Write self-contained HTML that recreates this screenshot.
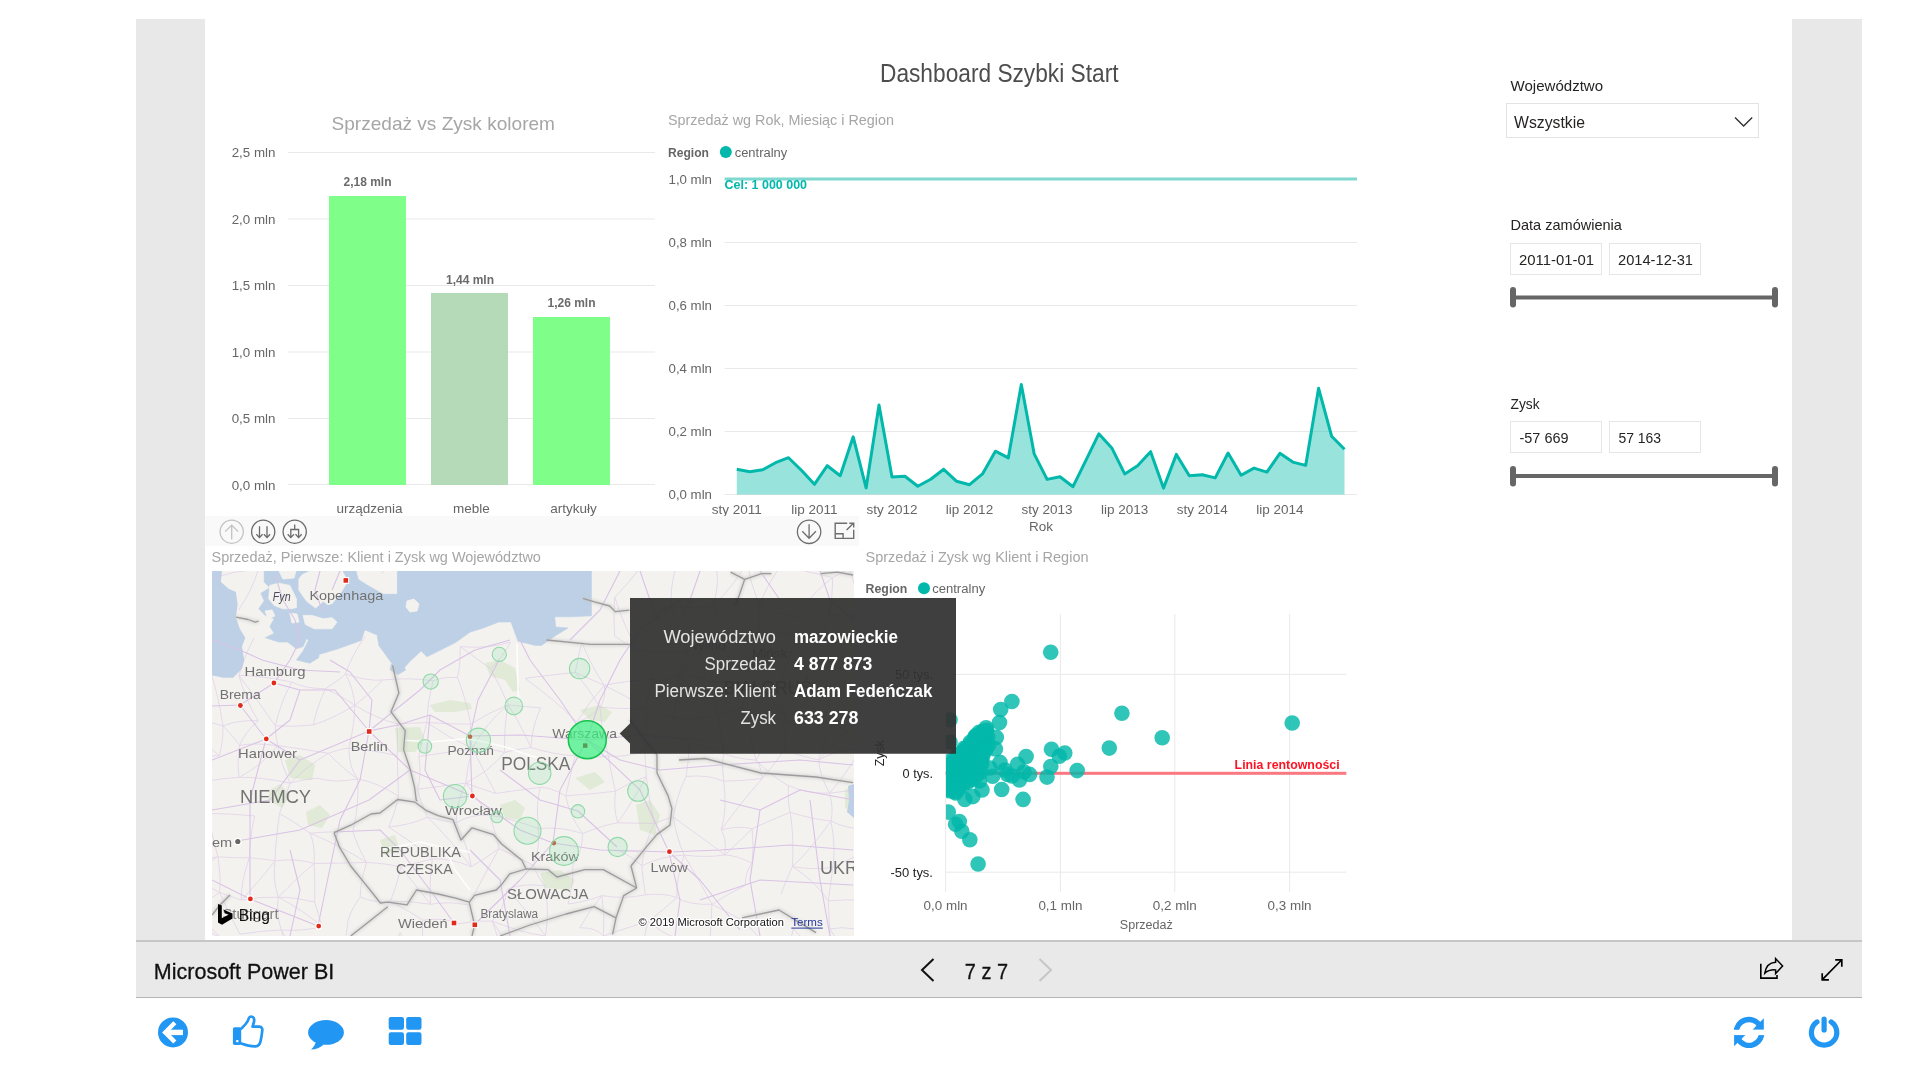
<!DOCTYPE html>
<html><head><meta charset="utf-8">
<style>
html,body{margin:0;padding:0;width:1920px;height:1080px;overflow:hidden;background:#fff;}
svg{display:block;font-family:"Liberation Sans",sans-serif;will-change:transform;}
</style></head>
<body>
<svg width="1920" height="1080" viewBox="0 0 1920 1080">
<!-- frame -->
<rect x="136" y="19" width="69" height="921" fill="#e8e8e8"/>
<rect x="1792" y="19" width="70" height="921" fill="#e8e8e8"/>
<!-- bottom bar -->
<rect x="136" y="940" width="1726" height="58" fill="#e9e9e9"/>
<rect x="136" y="940" width="1726" height="2" fill="#c6c6c6"/>
<rect x="136" y="997" width="1726" height="1" fill="#b4b4b4"/>

<!-- TITLE -->
<text x="880" y="82.3" font-size="25" fill="#4d4d4d" textLength="238.5" lengthAdjust="spacingAndGlyphs">Dashboard Szybki Start</text>

<!-- BAR CHART -->
<g id="bar">
<text x="331.5" y="130.1" font-size="18.5" fill="#a6a6a6" textLength="223.5" lengthAdjust="spacingAndGlyphs">Sprzedaż vs Zysk kolorem</text>
<g stroke="#e9e9e9" stroke-width="1">
<line x1="288" y1="152.5" x2="655" y2="152.5"/>
<line x1="288" y1="219" x2="655" y2="219"/>
<line x1="288" y1="285.5" x2="655" y2="285.5"/>
<line x1="288" y1="352" x2="655" y2="352"/>
<line x1="288" y1="418.5" x2="655" y2="418.5"/>
<line x1="288" y1="484.5" x2="655" y2="484.5"/>
</g>
<g font-size="12.5" fill="#666" text-anchor="end">
<text x="275.5" y="157" textLength="43.8" lengthAdjust="spacingAndGlyphs">2,5 mln</text>
<text x="275.5" y="223.5" textLength="43.8" lengthAdjust="spacingAndGlyphs">2,0 mln</text>
<text x="275.5" y="290" textLength="43.8" lengthAdjust="spacingAndGlyphs">1,5 mln</text>
<text x="275.5" y="356.5" textLength="43.8" lengthAdjust="spacingAndGlyphs">1,0 mln</text>
<text x="275.5" y="423" textLength="43.8" lengthAdjust="spacingAndGlyphs">0,5 mln</text>
<text x="275.5" y="489.5" textLength="43.8" lengthAdjust="spacingAndGlyphs">0,0 mln</text>
</g>
<rect x="329" y="196" width="77" height="289" fill="#80fe8a"/>
<rect x="431" y="293" width="77" height="192" fill="#b4dab7"/>
<rect x="533" y="317" width="77" height="168" fill="#80fe8a"/>
<g font-size="12" fill="#6b6b6b" font-weight="bold" text-anchor="middle">
<text x="367.5" y="186">2,18 mln</text>
<text x="470" y="283.8">1,44 mln</text>
<text x="571.5" y="306.7">1,26 mln</text>
</g>
<g font-size="13.5" fill="#666" text-anchor="middle">
<text x="369.5" y="512.5">urządzenia</text>
<text x="471.5" y="512.5">meble</text>
<text x="573.5" y="512.5">artykuły</text>
</g>
</g>


<!-- LINE CHART -->
<g id="linechart">
<text x="668" y="125.2" font-size="15" fill="#a6a6a6" textLength="226" lengthAdjust="spacingAndGlyphs">Sprzedaż wg Rok, Miesiąc i Region</text>
<text x="668" y="156.7" font-size="12.5" font-weight="bold" fill="#666" textLength="41" lengthAdjust="spacingAndGlyphs">Region</text>
<circle cx="725.8" cy="152.1" r="6" fill="#01b8aa"/>
<text x="734.7" y="156.7" font-size="12.5" fill="#666" textLength="52.6" lengthAdjust="spacingAndGlyphs">centralny</text>
<g stroke="#e9e9e9" stroke-width="1">
<line x1="724.6" y1="242.5" x2="1357" y2="242.5"/>
<line x1="724.6" y1="305.5" x2="1357" y2="305.5"/>
<line x1="724.6" y1="368.5" x2="1357" y2="368.5"/>
<line x1="724.6" y1="431.5" x2="1357" y2="431.5"/>
<line x1="724.6" y1="494.5" x2="1357" y2="494.5"/>
</g>
<g font-size="12.5" fill="#666" text-anchor="end">
<text x="712" y="184" textLength="43.5" lengthAdjust="spacingAndGlyphs">1,0 mln</text>
<text x="712" y="247" textLength="43.5" lengthAdjust="spacingAndGlyphs">0,8 mln</text>
<text x="712" y="310" textLength="43.5" lengthAdjust="spacingAndGlyphs">0,6 mln</text>
<text x="712" y="373" textLength="43.5" lengthAdjust="spacingAndGlyphs">0,4 mln</text>
<text x="712" y="436" textLength="43.5" lengthAdjust="spacingAndGlyphs">0,2 mln</text>
<text x="712" y="499" textLength="43.5" lengthAdjust="spacingAndGlyphs">0,0 mln</text>
</g>
<rect x="724.6" y="177.5" width="632.4" height="3" fill="#80d8d0"/>
<text x="724.6" y="188.9" font-size="12" font-weight="bold" fill="#01b8aa" textLength="82.4" lengthAdjust="spacingAndGlyphs">Cel: 1 000 000</text>
<polygon points="736.8,494.5 736.8,469.3 749.7,471.7 762.7,469.7 775.6,462.7 788.5,457.7 801.4,470.3 814.4,484.3 827.3,465.7 840.2,475.7 853.2,436.8 866.1,487.9 879.0,405.1 892.0,476.9 904.9,476.3 917.8,486.3 930.7,479.3 943.7,469.3 956.6,481.3 969.5,484.7 982.5,473.9 995.4,451.2 1008.3,457.9 1021.3,384.5 1034.2,453.9 1047.1,479.4 1060.0,476.7 1073.0,486.7 1085.9,460.3 1098.8,433.8 1111.8,447.9 1124.7,473.9 1137.6,465.7 1150.6,451.7 1163.5,488.1 1176.4,454.4 1189.3,475.8 1202.3,474.8 1215.2,477.9 1228.1,453 1241.1,475.2 1254.0,468.1 1266.9,472.1 1279.9,453.3 1292.8,462.1 1305.7,465.4 1318.6,388.3 1331.6,436.2 1344.5,449.3 1344.5,494.5" fill="#01b8aa" fill-opacity="0.4"/>
<polyline points="736.8,469.3 749.7,471.7 762.7,469.7 775.6,462.7 788.5,457.7 801.4,470.3 814.4,484.3 827.3,465.7 840.2,475.7 853.2,436.8 866.1,487.9 879.0,405.1 892.0,476.9 904.9,476.3 917.8,486.3 930.7,479.3 943.7,469.3 956.6,481.3 969.5,484.7 982.5,473.9 995.4,451.2 1008.3,457.9 1021.3,384.5 1034.2,453.9 1047.1,479.4 1060.0,476.7 1073.0,486.7 1085.9,460.3 1098.8,433.8 1111.8,447.9 1124.7,473.9 1137.6,465.7 1150.6,451.7 1163.5,488.1 1176.4,454.4 1189.3,475.8 1202.3,474.8 1215.2,477.9 1228.1,453 1241.1,475.2 1254.0,468.1 1266.9,472.1 1279.9,453.3 1292.8,462.1 1305.7,465.4 1318.6,388.3 1331.6,436.2 1344.5,449.3" fill="none" stroke="#01b8aa" stroke-width="3" stroke-linejoin="round"/>

<g font-size="13.5" fill="#666" text-anchor="middle">
<text x="736.8" y="513.7">sty 2011</text>
<text x="814.4" y="513.7">lip 2011</text>
<text x="892" y="513.7">sty 2012</text>
<text x="969.5" y="513.7">lip 2012</text>
<text x="1047.1" y="513.7">sty 2013</text>
<text x="1124.7" y="513.7">lip 2013</text>
<text x="1202.3" y="513.7">sty 2014</text>
<text x="1279.9" y="513.7">lip 2014</text>
<text x="1041" y="531.3">Rok</text>
</g>
</g>

<!-- TOOLBAR -->
<rect x="205" y="516" width="654" height="30" fill="#f9f9f9"/>
<g fill="none" stroke-width="1.3">
<g stroke="#c2c2c2"><circle cx="231.7" cy="531.7" r="11.6"/><path d="M231.7,539.4 V525.3 M225.2,531.6 L231.7,525.1 L238.2,531.6"/></g>
<g stroke="#6a6a6a"><circle cx="263.2" cy="531.7" r="11.6"/><path d="M259.5,526.2 V537 M256.4,534.2 L259.5,537.6 L262.6,534.2 M267,526.2 V537 M263.9,534.2 L267,537.6 L270.1,534.2"/></g>
<g stroke="#6a6a6a"><circle cx="294.7" cy="531.7" r="11.6"/><path d="M294.7,524.6 V529.5 M290.8,537 V529.5 H298.6 V537 M287.7,534.2 L290.8,537.6 L293.9,534.2 M295.5,534.2 L298.6,537.6 L301.7,534.2"/></g>
<g stroke="#6e6e6e"><circle cx="809.1" cy="531.8" r="11.7"/><path d="M809.1,524.3 V538 M802.3,531.2 L809.1,538.2 L815.9,531.2"/></g>
<g stroke="#6e6e6e" stroke-width="1.4"><path d="M847.2,523.3 H835.2 V538.4 H853.7 V529.7 M835.2,533.8 H843.1 V538.4 M846.6,530.1 L853.7,523 M849.3,523.3 H853.7 V527.4"/></g>
</g>

<!-- MAP TITLE -->
<text x="211.6" y="561.8" font-size="14.5" fill="#a6a6a6" textLength="329.3" lengthAdjust="spacingAndGlyphs">Sprzedaż, Pierwsze: Klient i Zysk wg Województwo</text>


<!-- MAP -->
<defs><clipPath id="mapClip"><rect x="212" y="571" width="642" height="365"/></clipPath>
<filter id="halo" x="-20%" y="-20%" width="140%" height="140%"><feGaussianBlur stdDeviation="1.6"/></filter></defs>
<g clip-path="url(#mapClip)">
<rect x="212" y="571" width="642" height="365" fill="#f4f2ef"/>
<polygon points="485.0,663.0 500.0,660.0 515.0,668.0 520.0,690.0 513.0,692.0 505.0,680.0 490.0,676.0" fill="#e0ead6"/>
<polygon points="430.0,705.0 450.0,700.0 470.0,703.0 472.0,709.0 455.0,712.0 435.0,712.0" fill="#e0ead6"/>
<polygon points="395.0,728.0 420.0,727.0 425.0,740.0 415.0,752.0 398.0,752.0" fill="#e0ead6"/>
<polygon points="580.0,710.0 600.0,705.0 612.0,712.0 605.0,722.0 590.0,720.0" fill="#e0ead6"/>
<polygon points="636.0,805.0 650.0,800.0 660.0,815.0 655.0,835.0 640.0,830.0" fill="#e0ead6"/>
<polygon points="540.0,873.0 560.0,870.0 575.0,880.0 570.0,890.0 545.0,888.0" fill="#e0ead6"/>
<polygon points="285.0,760.0 300.0,755.0 315.0,765.0 312.0,780.0 290.0,778.0" fill="#e0ead6"/>
<polygon points="306.0,812.0 320.0,805.0 330.0,815.0 322.0,828.0 308.0,825.0" fill="#e0ead6"/>
<polygon points="270.0,790.0 280.0,784.0 290.0,795.0 282.0,808.0 268.0,800.0" fill="#e0ead6"/>
<polygon points="500.0,805.0 515.0,800.0 525.0,808.0 520.0,820.0 505.0,818.0" fill="#e0ead6"/>
<polygon points="380.0,840.0 395.0,835.0 400.0,850.0 385.0,855.0" fill="#e0ead6"/>
<polygon points="845.0,790.0 853.0,785.0 853.0,810.0 845.0,808.0" fill="#e0ead6"/>
<polygon points="575.0,778.0 595.0,772.0 605.0,782.0 590.0,790.0" fill="#e0ead6"/>
<polygon points="212.0,571.0 222.0,571.0 220.9,582.1 228.7,588.8 235.9,592.1 237.6,604.3 235.9,617.7 239.8,628.8 245.3,637.7 242.0,646.6 244.2,659.9 242.0,668.8 233.1,677.7 223.1,677.7 217.6,676.6 212.0,675.4" fill="#bdd0e5"/>
<polygon points="264.2,571.0 591.4,571.0 591.4,590.4 591.4,615.8 572.0,616.8 554.7,616.8 555.7,627.0 568.0,628.0 554.7,636.2 541.5,645.4 535.4,645.4 518.0,641.3 511.0,622.0 498.7,622.0 483.4,628.0 470.2,632.1 455.5,642.6 427.0,656.8 421.1,651.0 410.0,661.3 403.5,668.5 393.0,665.0 378.9,645.6 377.1,635.1 364.8,629.8 361.3,640.4 336.7,649.2 319.0,654.4 318.7,657.7 309.8,663.2 296.4,659.9 303.1,651.0 308.7,639.9 306.4,638.8 303.1,646.6 296.4,648.8 287.6,642.1 278.7,642.1 265.3,637.7 274.2,633.2 269.8,626.6 274.2,618.8 265.3,615.4 258.7,608.8 264.2,601.0 260.9,593.2 269.8,587.7 264.2,582.1" fill="#bdd0e5" stroke="#bdd0e5" stroke-width="0.6" stroke-linejoin="round"/>
<polygon points="269.8,585.4 278.7,583.2 289.8,585.4 296.4,598.8 296.4,607.7 289.8,608.8 283.1,608.8 274.2,605.4 268.7,598.8" fill="#f4f2ef" stroke="#f4f2ef" stroke-width="0.8" stroke-linejoin="round"/>
<polygon points="302.2,574.7 310.0,571.0 342.2,571.0 347.8,581.3 341.0,592.4 332.2,603.6 327.8,604.7 323.3,601.3 315.6,608.0 306.7,601.3 298.9,590.2 298.9,579.0" fill="#f4f2ef" stroke="#f4f2ef" stroke-width="0.8" stroke-linejoin="round"/>
<polygon points="303.1,615.4 312.0,615.4 323.1,618.8 332.0,617.7 337.0,622.0 332.0,628.8 323.1,628.8 314.2,628.8 305.3,624.3" fill="#f4f2ef" stroke="#f4f2ef" stroke-width="0.8" stroke-linejoin="round"/>
<polygon points="356.7,571.0 396.7,571.0 396.7,593.6 383.3,593.6 367.8,584.7 358.9,579.1" fill="#f4f2ef" stroke="#f4f2ef" stroke-width="0.8" stroke-linejoin="round"/>
<polygon points="407.0,601.0 414.0,599.0 419.0,604.0 417.0,611.0 410.0,612.0 406.0,607.0" fill="#f4f2ef" stroke="#f4f2ef" stroke-width="0.8" stroke-linejoin="round"/>
<polygon points="265.0,611.0 272.0,610.0 275.0,616.0 268.0,619.0" fill="#f4f2ef" stroke="#f4f2ef" stroke-width="0.8" stroke-linejoin="round"/>
<polygon points="289.8,613.0 297.0,614.0 299.0,622.0 292.0,623.0" fill="#f4f2ef" stroke="#f4f2ef" stroke-width="0.8" stroke-linejoin="round"/>
<polygon points="279.0,571.0 296.0,571.0 294.0,578.0 283.0,579.0" fill="#f4f2ef" stroke="#f4f2ef" stroke-width="0.8" stroke-linejoin="round"/>
<polygon points="391.0,664.0 402.0,663.0 406.0,670.0 398.0,675.0 390.0,670.0" fill="#bdd0e5"/>
<polygon points="848.0,786.0 854.0,784.0 854.0,818.0 847.0,812.0 849.0,800.0" fill="#bdd0e5"/>
<g fill="none" stroke="#d9c3e6" stroke-width="1" opacity="0.55"><path d="M175.0,536.3 Q186.2,536.8 201.7,534.2"/><path d="M175.0,536.3 Q178.0,555.4 185.3,570.2"/><path d="M185.3,570.2 Q195.5,569.8 210.7,578.5"/><path d="M185.3,570.2 Q183.3,588.5 176.2,608.9"/><path d="M176.2,608.9 Q198.1,627.0 212.0,646.6"/><path d="M169.1,643.3 Q195.3,642.4 212.0,646.6"/><path d="M169.1,643.3 Q178.3,666.6 178.9,685.4"/><path d="M167.1,710.7 Q196.3,717.8 222.9,725.9"/><path d="M167.1,710.7 Q162.6,734.5 167.0,757.8"/><path d="M167.1,710.7 Q192.7,734.8 219.5,755.6"/><path d="M167.0,757.8 Q190.9,757.5 219.5,755.6"/><path d="M167.0,757.8 Q176.4,767.7 180.3,776.9"/><path d="M180.3,776.9 Q180.8,801.2 186.6,833.2"/><path d="M186.6,833.2 Q181.6,845.1 179.4,861.5"/><path d="M179.4,861.5 Q199.5,860.5 217.9,856.8"/><path d="M179.4,861.5 Q197.0,881.8 219.6,892.5"/><path d="M168.5,884.3 Q190.9,909.2 222.1,938.6"/><path d="M176.6,921.3 Q200.6,926.0 222.1,938.6"/><path d="M176.6,921.3 Q168.6,937.2 169.2,961.3"/><path d="M169.2,961.3 Q186.4,959.7 201.0,960.6"/><path d="M201.7,534.2 Q226.5,532.7 257.0,534.3"/><path d="M201.7,534.2 Q209.6,552.1 210.7,578.5"/><path d="M201.7,534.2 Q233.2,552.7 258.6,568.7"/><path d="M210.7,578.5 Q233.9,571.2 258.6,568.7"/><path d="M212.0,646.6 Q207.4,661.0 211.1,674.1"/><path d="M211.1,674.1 Q218.6,695.8 222.9,725.9"/><path d="M222.9,725.9 Q238.4,719.7 258.2,720.7"/><path d="M222.9,725.9 Q223.5,739.4 219.5,755.6"/><path d="M222.9,725.9 Q233.4,736.4 239.6,745.4"/><path d="M207.9,781.1 Q221.8,778.2 239.2,777.3"/><path d="M207.4,813.5 Q229.6,813.4 254.5,815.9"/><path d="M207.4,813.5 Q211.5,832.1 217.9,856.8"/><path d="M217.9,856.8 Q236.9,858.0 249.3,857.8"/><path d="M217.9,856.8 Q221.3,878.5 219.6,892.5"/><path d="M217.9,856.8 Q193.3,871.0 168.5,884.3"/><path d="M219.6,892.5 Q235.1,897.8 241.2,900.1"/><path d="M219.6,892.5 Q230.2,916.2 239.9,934.2"/><path d="M219.6,892.5 Q193.9,909.3 176.6,921.3"/><path d="M222.1,938.6 Q212.9,946.1 201.0,960.6"/><path d="M201.0,960.6 Q217.5,965.6 239.6,965.3"/><path d="M257.0,534.3 Q270.0,531.1 277.7,529.9"/><path d="M257.0,534.3 Q262.5,553.3 258.6,568.7"/><path d="M258.6,568.7 Q251.8,591.0 238.6,609.8"/><path d="M254.1,637.9 Q245.7,653.1 238.9,675.3"/><path d="M238.9,675.3 Q262.0,675.8 291.8,682.1"/><path d="M238.9,675.3 Q246.5,702.7 258.2,720.7"/><path d="M238.9,675.3 Q255.1,696.7 275.2,725.8"/><path d="M258.2,720.7 Q244.5,732.6 239.6,745.4"/><path d="M239.6,745.4 Q254.7,742.4 277.7,745.7"/><path d="M239.6,745.4 Q236.8,763.5 239.2,777.3"/><path d="M239.2,777.3 Q262.4,777.0 290.0,783.2"/><path d="M254.5,815.9 Q249.5,840.8 249.3,857.8"/><path d="M249.3,857.8 Q266.7,859.2 275.0,860.8"/><path d="M249.3,857.8 Q240.7,883.4 241.2,900.1"/><path d="M241.2,900.1 Q259.9,896.4 278.3,897.2"/><path d="M239.9,934.2 Q260.3,930.8 281.2,930.0"/><path d="M239.6,965.3 Q263.4,964.2 294.1,966.6"/><path d="M277.7,529.9 Q303.4,536.7 321.6,543.1"/><path d="M277.7,529.9 Q270.8,544.4 258.6,568.7"/><path d="M291.8,682.1 Q305.1,688.7 325.3,688.7"/><path d="M291.8,682.1 Q281.6,699.7 275.2,725.8"/><path d="M275.2,725.8 Q292.9,727.2 313.3,724.9"/><path d="M275.2,725.8 Q275.4,735.3 277.7,745.7"/><path d="M277.7,745.7 Q298.2,748.3 328.4,753.3"/><path d="M277.7,745.7 Q281.2,765.1 290.0,783.2"/><path d="M277.7,745.7 Q263.4,764.5 239.2,777.3"/><path d="M290.0,783.2 Q305.3,778.7 318.3,778.3"/><path d="M290.0,783.2 Q285.2,796.4 279.5,813.6"/><path d="M279.5,813.6 Q292.2,820.4 309.9,833.2"/><path d="M279.5,813.6 Q275.5,841.7 275.0,860.8"/><path d="M275.0,860.8 Q297.9,858.1 314.2,863.5"/><path d="M275.0,860.8 Q272.6,880.8 278.3,897.2"/><path d="M275.0,860.8 Q257.1,883.8 241.2,900.1"/><path d="M278.3,897.2 Q292.4,896.9 314.7,902.1"/><path d="M278.3,897.2 Q276.0,912.7 281.2,930.0"/><path d="M278.3,897.2 Q304.4,911.1 322.1,926.5"/><path d="M281.2,930.0 Q304.3,931.4 322.1,926.5"/><path d="M281.2,930.0 Q286.0,947.4 294.1,966.6"/><path d="M281.2,930.0 Q296.0,952.9 312.9,971.8"/><path d="M321.6,543.1 Q335.2,531.2 346.5,529.0"/><path d="M321.6,543.1 Q315.8,554.7 313.0,563.4"/><path d="M325.3,688.7 Q339.6,679.9 345.4,673.9"/><path d="M325.3,688.7 Q315.5,711.5 313.3,724.9"/><path d="M325.3,688.7 Q344.1,697.4 354.8,705.3"/><path d="M313.3,724.9 Q331.7,719.2 354.8,705.3"/><path d="M328.4,753.3 Q341.9,748.6 348.9,748.1"/><path d="M328.4,753.3 Q343.7,769.4 357.6,778.9"/><path d="M328.4,753.3 Q309.7,764.0 290.0,783.2"/><path d="M318.3,778.3 Q334.7,783.5 357.6,778.9"/><path d="M309.9,833.2 Q333.8,831.2 353.0,831.6"/><path d="M309.9,833.2 Q315.1,843.5 314.2,863.5"/><path d="M309.9,833.2 Q337.9,844.2 366.6,862.5"/><path d="M314.2,863.5 Q337.1,863.2 366.6,862.5"/><path d="M314.2,863.5 Q315.1,881.1 314.7,902.1"/><path d="M314.2,863.5 Q298.0,876.8 278.3,897.2"/><path d="M314.7,902.1 Q318.1,913.4 322.1,926.5"/><path d="M365.2,636.5 Q352.7,653.3 345.4,673.9"/><path d="M345.4,673.9 Q368.1,681.6 382.7,680.0"/><path d="M345.4,673.9 Q353.7,688.8 354.8,705.3"/><path d="M354.8,705.3 Q376.7,718.6 397.2,723.8"/><path d="M354.8,705.3 Q354.8,723.0 348.9,748.1"/><path d="M348.9,748.1 Q370.5,749.8 397.2,755.5"/><path d="M348.9,748.1 Q348.9,767.5 357.6,778.9"/><path d="M357.6,778.9 Q378.9,783.0 398.5,796.1"/><path d="M357.6,778.9 Q359.3,803.3 353.0,831.6"/><path d="M353.0,831.6 Q356.8,845.0 366.6,862.5"/><path d="M366.6,862.5 Q387.1,863.3 400.8,867.2"/><path d="M366.6,862.5 Q360.1,883.5 360.2,896.9"/><path d="M360.2,896.9 Q372.1,902.9 390.2,901.4"/><path d="M360.2,896.9 Q350.2,911.1 348.1,920.8"/><path d="M348.1,920.8 Q343.1,950.4 345.4,976.0"/><path d="M345.4,976.0 Q367.3,968.3 394.7,964.4"/><path d="M396.4,545.2 Q410.1,538.1 429.8,537.4"/><path d="M396.4,545.2 Q390.6,562.5 381.5,574.0"/><path d="M382.7,680.0 Q408.4,677.3 433.2,680.8"/><path d="M382.7,680.0 Q368.3,695.2 354.8,705.3"/><path d="M397.2,723.8 Q416.2,723.1 426.7,722.4"/><path d="M397.2,723.8 Q397.8,741.1 397.2,755.5"/><path d="M397.2,755.5 Q397.9,779.3 398.5,796.1"/><path d="M398.5,796.1 Q396.4,808.3 388.7,827.1"/><path d="M388.7,827.1 Q410.9,824.9 427.6,817.1"/><path d="M388.7,827.1 Q410.4,840.2 432.4,858.9"/><path d="M400.8,867.2 Q411.9,864.0 432.4,858.9"/><path d="M400.8,867.2 Q396.2,888.0 390.2,901.4"/><path d="M400.8,867.2 Q412.2,880.9 430.5,904.3"/><path d="M390.2,901.4 Q409.8,900.5 430.5,904.3"/><path d="M390.2,901.4 Q410.5,911.5 422.6,920.2"/><path d="M400.0,932.6 Q393.8,946.6 394.7,964.4"/><path d="M400.0,932.6 Q410.0,953.0 423.6,970.9"/><path d="M394.7,964.4 Q410.1,963.5 423.6,970.9"/><path d="M433.2,680.8 Q442.6,676.7 457.4,677.5"/><path d="M433.2,680.8 Q427.3,701.2 426.7,722.4"/><path d="M426.7,722.4 Q453.5,724.4 470.7,724.1"/><path d="M426.7,722.4 Q421.8,741.0 418.8,756.5"/><path d="M426.7,722.4 Q448.0,737.4 472.4,748.5"/><path d="M418.8,756.5 Q449.5,752.1 472.4,748.5"/><path d="M418.8,756.5 Q421.7,771.7 417.7,789.2"/><path d="M417.7,789.2 Q438.6,786.6 465.8,783.0"/><path d="M417.7,789.2 Q419.7,800.3 427.6,817.1"/><path d="M427.6,817.1 Q446.7,821.8 456.0,822.9"/><path d="M427.6,817.1 Q448.3,837.6 471.4,866.7"/><path d="M432.4,858.9 Q449.6,858.0 471.4,866.7"/><path d="M432.4,858.9 Q429.1,880.5 430.5,904.3"/><path d="M430.5,904.3 Q448.2,901.1 468.6,904.9"/><path d="M422.6,920.2 Q444.9,917.2 459.1,923.7"/><path d="M422.6,920.2 Q422.0,941.4 423.6,970.9"/><path d="M457.5,527.7 Q471.1,529.4 493.7,533.1"/><path d="M460.2,646.6 Q488.5,649.1 510.6,642.0"/><path d="M460.2,646.6 Q460.5,666.3 457.4,677.5"/><path d="M460.2,646.6 Q477.3,659.3 490.6,668.7"/><path d="M457.4,677.5 Q465.4,696.7 470.7,724.1"/><path d="M470.7,724.1 Q488.3,712.8 508.2,704.9"/><path d="M470.7,724.1 Q469.3,732.9 472.4,748.5"/><path d="M472.4,748.5 Q490.1,747.9 504.6,752.6"/><path d="M472.4,748.5 Q467.5,764.9 465.8,783.0"/><path d="M472.4,748.5 Q484.9,772.9 495.8,793.4"/><path d="M465.8,783.0 Q476.0,787.1 495.8,793.4"/><path d="M465.8,783.0 Q456.5,802.0 456.0,822.9"/><path d="M465.8,783.0 Q477.6,799.8 489.4,815.0"/><path d="M456.0,822.9 Q470.2,814.2 489.4,815.0"/><path d="M456.0,822.9 Q467.6,845.5 471.4,866.7"/><path d="M471.4,866.7 Q484.9,858.8 499.0,848.5"/><path d="M459.1,923.7 Q474.8,920.1 492.1,921.0"/><path d="M493.7,533.1 Q512.6,535.8 538.9,538.4"/><path d="M493.7,533.1 Q496.8,556.8 502.8,570.9"/><path d="M510.6,642.0 Q502.8,657.3 490.6,668.7"/><path d="M490.6,668.7 Q500.6,686.7 508.2,704.9"/><path d="M508.2,704.9 Q526.9,706.8 540.7,707.9"/><path d="M508.2,704.9 Q503.9,727.0 504.6,752.6"/><path d="M508.2,704.9 Q519.7,722.5 531.0,747.6"/><path d="M508.2,704.9 Q486.0,722.7 472.4,748.5"/><path d="M504.6,752.6 Q513.9,749.6 531.0,747.6"/><path d="M504.6,752.6 Q488.9,771.5 465.8,783.0"/><path d="M495.8,793.4 Q515.6,790.5 540.3,787.4"/><path d="M489.4,815.0 Q516.1,820.1 538.5,828.6"/><path d="M489.4,815.0 Q496.8,835.2 499.0,848.5"/><path d="M499.0,848.5 Q518.4,858.2 533.7,865.4"/><path d="M499.0,848.5 Q482.6,878.4 468.6,904.9"/><path d="M507.3,889.2 Q522.9,882.7 544.9,885.9"/><path d="M507.3,889.2 Q504.1,909.8 492.1,921.0"/><path d="M507.3,889.2 Q528.3,911.8 545.5,935.9"/><path d="M492.1,921.0 Q523.1,933.4 545.5,935.9"/><path d="M492.1,921.0 Q499.6,939.6 502.8,965.8"/><path d="M492.1,921.0 Q507.8,945.8 527.9,966.0"/><path d="M502.8,965.8 Q513.7,961.2 527.9,966.0"/><path d="M538.9,538.4 Q556.6,539.9 574.8,544.0"/><path d="M525.2,678.4 Q547.1,675.3 575.3,672.5"/><path d="M525.2,678.4 Q554.7,700.0 576.9,722.0"/><path d="M540.7,707.9 Q531.4,728.3 531.0,747.6"/><path d="M531.0,747.6 Q557.4,755.3 575.1,755.8"/><path d="M540.3,787.4 Q549.8,786.9 565.7,795.8"/><path d="M540.3,787.4 Q535.6,803.8 538.5,828.6"/><path d="M538.5,828.6 Q560.7,826.2 582.6,833.5"/><path d="M538.5,828.6 Q540.7,842.1 533.7,865.4"/><path d="M533.7,865.4 Q538.3,878.7 544.9,885.9"/><path d="M544.9,885.9 Q549.7,909.9 545.5,935.9"/><path d="M545.5,935.9 Q537.5,948.2 527.9,966.0"/><path d="M527.9,966.0 Q548.4,964.5 562.8,965.7"/><path d="M574.8,544.0 Q590.5,540.3 609.1,540.9"/><path d="M581.8,642.2 Q577.6,659.4 575.3,672.5"/><path d="M581.8,642.2 Q590.8,665.5 604.4,685.3"/><path d="M575.3,672.5 Q586.7,677.5 604.4,685.3"/><path d="M575.3,672.5 Q589.1,688.7 600.1,707.3"/><path d="M576.9,722.0 Q589.6,718.5 600.1,707.3"/><path d="M575.1,755.8 Q587.9,759.2 608.4,755.9"/><path d="M575.1,755.8 Q569.9,777.4 565.7,795.8"/><path d="M565.7,795.8 Q591.6,794.2 615.5,791.2"/><path d="M565.7,795.8 Q569.5,815.9 582.6,833.5"/><path d="M582.6,833.5 Q604.5,824.7 617.8,822.8"/><path d="M582.6,833.5 Q582.6,851.8 572.8,865.4"/><path d="M572.8,865.4 Q574.1,881.0 568.0,904.0"/><path d="M568.0,904.0 Q588.4,901.3 601.9,895.6"/><path d="M579.8,927.7 Q596.5,927.5 603.4,936.0"/><path d="M609.1,540.9 Q630.7,542.3 651.6,536.3"/><path d="M609.1,540.9 Q606.2,552.2 607.7,560.6"/><path d="M609.1,540.9 Q625.0,557.5 639.9,568.4"/><path d="M607.7,560.6 Q626.8,568.1 639.9,568.4"/><path d="M614.8,597.4 Q613.4,612.6 614.6,635.8"/><path d="M614.8,597.4 Q624.6,627.7 637.6,650.7"/><path d="M614.6,635.8 Q622.9,642.1 637.6,650.7"/><path d="M604.4,685.3 Q634.2,679.5 654.3,679.5"/><path d="M604.4,685.3 Q606.0,698.6 600.1,707.3"/><path d="M604.4,685.3 Q626.7,696.2 645.6,708.4"/><path d="M604.4,685.3 Q589.0,701.8 576.9,722.0"/><path d="M600.1,707.3 Q620.6,708.9 645.6,708.4"/><path d="M600.1,707.3 Q601.0,727.9 608.4,755.9"/><path d="M608.4,755.9 Q622.7,757.9 644.8,751.1"/><path d="M608.4,755.9 Q610.5,770.5 615.5,791.2"/><path d="M615.5,791.2 Q629.5,782.0 646.3,776.6"/><path d="M615.5,791.2 Q613.1,808.3 617.8,822.8"/><path d="M617.8,822.8 Q635.6,823.2 654.3,823.4"/><path d="M617.9,849.9 Q630.6,855.6 641.8,865.6"/><path d="M601.9,895.6 Q623.2,899.5 645.4,894.8"/><path d="M601.9,895.6 Q605.1,916.8 603.4,936.0"/><path d="M601.9,895.6 Q590.0,909.4 579.8,927.7"/><path d="M603.4,936.0 Q630.3,926.7 648.2,921.4"/><path d="M603.4,936.0 Q608.9,949.2 611.1,967.5"/><path d="M603.4,936.0 Q587.1,948.4 562.8,965.7"/><path d="M611.1,967.5 Q626.4,969.5 644.9,965.1"/><path d="M651.6,536.3 Q646.2,548.3 639.9,568.4"/><path d="M651.6,536.3 Q628.3,547.2 607.7,560.6"/><path d="M639.9,568.4 Q659.1,567.8 674.9,570.4"/><path d="M639.9,568.4 Q628.7,582.6 614.8,597.4"/><path d="M651.6,615.8 Q661.3,608.8 671.8,605.5"/><path d="M651.6,615.8 Q645.6,638.0 637.6,650.7"/><path d="M637.6,650.7 Q665.6,652.8 686.9,651.8"/><path d="M637.6,650.7 Q650.9,660.8 654.3,679.5"/><path d="M654.3,679.5 Q664.1,682.2 679.5,675.0"/><path d="M654.3,679.5 Q648.7,690.4 645.6,708.4"/><path d="M645.6,708.4 Q656.1,714.5 673.2,717.6"/><path d="M645.6,708.4 Q647.6,727.3 644.8,751.1"/><path d="M644.8,751.1 Q645.2,759.0 646.3,776.6"/><path d="M646.3,776.6 Q648.8,800.3 654.3,823.4"/><path d="M646.3,776.6 Q635.0,797.7 617.8,822.8"/><path d="M654.3,823.4 Q660.0,820.9 673.3,817.0"/><path d="M654.3,823.4 Q644.0,844.6 641.8,865.6"/><path d="M641.8,865.6 Q662.1,855.9 684.1,855.1"/><path d="M641.8,865.6 Q643.1,880.8 645.4,894.8"/><path d="M645.4,894.8 Q664.6,892.8 676.8,897.6"/><path d="M648.2,921.4 Q663.4,933.4 671.3,936.1"/><path d="M648.2,921.4 Q641.6,939.8 644.9,965.1"/><path d="M644.9,965.1 Q654.8,966.5 671.7,967.2"/><path d="M690.1,544.3 Q696.4,534.3 710.5,528.4"/><path d="M674.9,570.4 Q695.0,565.8 716.7,569.6"/><path d="M674.9,570.4 Q669.5,592.2 671.8,605.5"/><path d="M671.8,605.5 Q696.4,609.8 713.3,605.1"/><path d="M671.8,605.5 Q679.4,632.7 686.9,651.8"/><path d="M686.9,651.8 Q699.4,642.3 716.6,635.5"/><path d="M686.9,651.8 Q683.0,662.0 679.5,675.0"/><path d="M679.5,675.0 Q697.8,674.1 709.5,681.9"/><path d="M679.5,675.0 Q676.8,695.3 673.2,717.6"/><path d="M679.5,675.0 Q695.3,694.0 719.0,715.7"/><path d="M673.2,717.6 Q693.4,719.1 719.0,715.7"/><path d="M673.2,717.6 Q676.4,729.3 689.4,742.8"/><path d="M673.2,717.6 Q659.9,738.9 644.8,751.1"/><path d="M689.4,742.8 Q707.5,746.8 723.7,753.5"/><path d="M689.4,742.8 Q688.8,760.6 686.1,776.5"/><path d="M686.1,776.5 Q707.5,774.3 723.8,781.1"/><path d="M686.1,776.5 Q677.2,794.5 673.3,817.0"/><path d="M673.3,817.0 Q676.6,837.8 684.1,855.1"/><path d="M673.3,817.0 Q703.9,839.3 724.9,854.9"/><path d="M684.1,855.1 Q707.7,857.9 724.9,854.9"/><path d="M684.1,855.1 Q676.0,879.0 676.8,897.6"/><path d="M684.1,855.1 Q699.3,880.2 711.9,904.3"/><path d="M676.8,897.6 Q689.6,905.3 711.9,904.3"/><path d="M676.8,897.6 Q664.9,908.7 648.2,921.4"/><path d="M671.3,936.1 Q695.4,943.2 709.8,942.0"/><path d="M671.3,936.1 Q674.3,951.1 671.7,967.2"/><path d="M671.7,967.2 Q697.5,959.3 724.5,958.9"/><path d="M710.5,528.4 Q730.7,529.9 746.3,540.0"/><path d="M710.5,528.4 Q716.9,550.6 716.7,569.6"/><path d="M710.5,528.4 Q688.9,547.5 674.9,570.4"/><path d="M716.7,569.6 Q719.2,584.5 713.3,605.1"/><path d="M713.3,605.1 Q718.7,620.0 716.6,635.5"/><path d="M713.3,605.1 Q735.1,618.7 758.4,634.8"/><path d="M716.6,635.5 Q715.0,657.6 709.5,681.9"/><path d="M716.6,635.5 Q700.5,651.9 679.5,675.0"/><path d="M709.5,681.9 Q726.7,680.9 749.9,683.1"/><path d="M709.5,681.9 Q712.8,699.7 719.0,715.7"/><path d="M719.0,715.7 Q733.6,710.6 741.4,708.4"/><path d="M719.0,715.7 Q721.2,739.4 723.7,753.5"/><path d="M723.7,753.5 Q737.5,759.1 756.0,760.1"/><path d="M723.7,753.5 Q721.4,762.9 723.8,781.1"/><path d="M723.8,781.1 Q742.4,781.0 762.3,778.5"/><path d="M723.8,781.1 Q727.3,809.6 721.3,829.8"/><path d="M721.3,829.8 Q739.2,825.3 752.1,828.7"/><path d="M721.3,829.8 Q726.6,837.7 724.9,854.9"/><path d="M724.9,854.9 Q736.8,855.5 752.1,863.1"/><path d="M711.9,904.3 Q731.4,892.1 745.2,885.6"/><path d="M711.9,904.3 Q711.2,924.2 709.8,942.0"/><path d="M711.9,904.3 Q730.3,913.4 743.3,920.8"/><path d="M709.8,942.0 Q715.8,955.0 724.5,958.9"/><path d="M746.3,540.0 Q765.5,531.1 789.5,527.2"/><path d="M746.3,540.0 Q746.9,548.6 746.7,562.1"/><path d="M746.7,562.1 Q763.7,561.0 781.1,564.5"/><path d="M746.7,562.1 Q750.8,583.8 759.3,605.3"/><path d="M746.7,562.1 Q733.6,587.2 713.3,605.1"/><path d="M759.3,605.3 Q777.8,613.9 795.5,617.8"/><path d="M759.3,605.3 Q760.4,624.2 758.4,634.8"/><path d="M758.4,634.8 Q782.3,633.1 797.4,634.1"/><path d="M758.4,634.8 Q767.9,660.6 778.4,688.9"/><path d="M749.9,683.1 Q746.3,694.2 741.4,708.4"/><path d="M749.9,683.1 Q773.0,698.1 787.2,720.8"/><path d="M741.4,708.4 Q760.0,718.6 787.2,720.8"/><path d="M741.4,708.4 Q749.4,730.4 756.0,760.1"/><path d="M756.0,760.1 Q760.8,765.0 762.3,778.5"/><path d="M756.0,760.1 Q772.9,777.6 788.3,785.5"/><path d="M762.3,778.5 Q742.1,801.0 721.3,829.8"/><path d="M752.1,828.7 Q769.7,820.5 790.2,812.3"/><path d="M752.1,828.7 Q754.1,845.1 752.1,863.1"/><path d="M752.1,828.7 Q738.4,842.4 724.9,854.9"/><path d="M752.1,863.1 Q745.0,872.3 745.2,885.6"/><path d="M743.3,920.8 Q762.2,941.1 781.3,959.6"/><path d="M753.1,967.3 Q768.3,967.8 781.3,959.6"/><path d="M789.5,527.2 Q807.1,530.4 824.3,524.3"/><path d="M789.5,527.2 Q781.4,549.5 781.1,564.5"/><path d="M789.5,527.2 Q763.4,548.0 746.7,562.1"/><path d="M781.1,564.5 Q807.1,571.9 832.7,577.6"/><path d="M781.1,564.5 Q765.9,587.8 759.3,605.3"/><path d="M797.4,634.1 Q807.3,640.2 826.8,640.9"/><path d="M797.4,634.1 Q788.7,661.8 778.4,688.9"/><path d="M778.4,688.9 Q799.6,687.8 826.2,679.1"/><path d="M778.4,688.9 Q779.3,702.4 787.2,720.8"/><path d="M787.2,720.8 Q808.3,722.8 834.6,721.7"/><path d="M787.2,720.8 Q785.9,733.1 784.2,750.3"/><path d="M787.2,720.8 Q768.9,738.5 756.0,760.1"/><path d="M784.2,750.3 Q803.7,756.9 818.7,760.0"/><path d="M784.2,750.3 Q775.9,761.9 762.3,778.5"/><path d="M788.3,785.5 Q808.0,794.2 829.4,793.1"/><path d="M788.3,785.5 Q787.8,803.0 790.2,812.3"/><path d="M790.2,812.3 Q813.5,819.4 830.9,820.9"/><path d="M790.2,812.3 Q794.2,838.2 792.4,866.6"/><path d="M792.4,866.6 Q812.3,870.1 832.7,867.4"/><path d="M792.4,866.6 Q786.7,879.1 781.0,894.0"/><path d="M792.4,866.6 Q814.5,880.2 828.3,900.9"/><path d="M793.3,928.9 Q789.4,948.7 781.3,959.6"/><path d="M793.3,928.9 Q807.4,945.0 828.9,957.6"/><path d="M781.3,959.6 Q809.6,958.1 828.9,957.6"/><path d="M824.3,524.3 Q836.6,527.1 856.5,534.3"/><path d="M824.3,524.3 Q833.6,544.6 849.2,567.8"/><path d="M824.3,524.3 Q800.7,541.2 781.1,564.5"/><path d="M832.7,577.6 Q841.2,573.1 849.2,567.8"/><path d="M832.7,577.6 Q833.2,596.6 828.5,614.9"/><path d="M832.7,577.6 Q811.3,593.5 795.5,617.8"/><path d="M828.5,614.9 Q848.4,616.6 863.1,609.7"/><path d="M828.5,614.9 Q824.3,626.2 826.8,640.9"/><path d="M826.2,679.1 Q827.3,704.8 834.6,721.7"/><path d="M826.2,679.1 Q809.3,699.0 787.2,720.8"/><path d="M834.6,721.7 Q845.7,715.8 863.5,716.5"/><path d="M834.6,721.7 Q823.8,736.1 818.7,760.0"/><path d="M834.6,721.7 Q850.7,735.1 860.7,748.6"/><path d="M818.7,760.0 Q836.5,749.5 860.7,748.6"/><path d="M818.7,760.0 Q819.4,774.2 829.4,793.1"/><path d="M829.4,793.1 Q851.4,789.8 871.0,790.1"/><path d="M829.4,793.1 Q834.0,807.8 830.9,820.9"/><path d="M830.9,820.9 Q846.0,829.0 864.4,828.8"/><path d="M830.9,820.9 Q836.2,847.7 832.7,867.4"/><path d="M830.9,820.9 Q811.8,848.6 792.4,866.6"/><path d="M832.7,867.4 Q848.4,860.2 870.6,848.5"/><path d="M832.7,867.4 Q831.3,880.7 828.3,900.9"/><path d="M828.3,900.9 Q847.3,899.0 862.5,900.3"/><path d="M828.3,900.9 Q829.0,919.1 829.8,928.9"/><path d="M829.8,928.9 Q842.2,926.6 854.6,928.8"/><path d="M829.8,928.9 Q830.7,942.9 828.9,957.6"/><path d="M829.8,928.9 Q839.9,944.4 850.1,960.3"/><path d="M856.5,534.3 Q874.3,526.1 893.3,526.2"/><path d="M856.5,534.3 Q876.8,560.1 890.5,579.9"/><path d="M849.2,567.8 Q855.4,589.3 863.1,609.7"/><path d="M863.1,609.7 Q878.0,611.9 897.1,607.2"/><path d="M863.1,609.7 Q857.0,628.2 854.1,652.8"/><path d="M863.1,609.7 Q888.0,630.1 906.3,644.5"/><path d="M854.1,652.8 Q861.9,666.2 863.7,675.4"/><path d="M863.7,675.4 Q888.4,676.8 906.9,682.0"/><path d="M863.7,675.4 Q867.8,691.2 863.5,716.5"/><path d="M863.5,716.5 Q866.2,736.9 860.7,748.6"/><path d="M863.5,716.5 Q842.8,734.4 818.7,760.0"/><path d="M860.7,748.6 Q847.0,773.4 829.4,793.1"/><path d="M871.0,790.1 Q864.0,811.7 864.4,828.8"/><path d="M871.0,790.1 Q883.4,808.9 888.5,822.4"/><path d="M864.4,828.8 Q871.9,840.0 870.6,848.5"/><path d="M870.6,848.5 Q874.9,850.3 888.7,858.9"/><path d="M870.6,848.5 Q886.0,869.6 898.4,885.3"/><path d="M862.5,900.3 Q878.7,890.5 898.4,885.3"/><path d="M862.5,900.3 Q860.1,916.4 854.6,928.8"/><path d="M850.1,960.3 Q878.0,967.5 896.6,969.2"/><path d="M893.3,526.2 Q889.7,553.3 890.5,579.9"/><path d="M890.5,579.9 Q897.4,593.9 897.1,607.2"/><path d="M897.1,607.2 Q899.2,622.8 906.3,644.5"/><path d="M906.3,644.5 Q904.9,659.0 906.9,682.0"/><path d="M906.3,644.5 Q883.5,660.2 863.7,675.4"/><path d="M902.8,705.7 Q899.5,728.5 898.1,756.7"/><path d="M898.1,756.7 Q883.9,775.3 871.0,790.1"/><path d="M888.5,822.4 Q893.0,844.7 888.7,858.9"/><path d="M888.7,858.9 Q898.6,872.4 898.4,885.3"/><path d="M888.7,858.9 Q878.3,875.1 862.5,900.3"/><path d="M898.4,885.3 Q902.6,905.0 905.8,929.3"/><path d="M905.8,929.3 Q899.4,951.9 896.6,969.2"/></g>
<polyline points="212.0,706.0 240.0,705.0 274.0,683.0 300.0,690.0 335.0,690.0 369.0,731.0 398.0,725.0 430.0,715.0 470.0,736.0 520.0,735.0 587.0,740.0 640.0,735.0 700.0,740.0" fill="none" stroke="#d9c3e6" stroke-width="1.1" stroke-linejoin="round"/>
<polyline points="240.0,705.0 266.0,739.0 300.0,760.0 369.0,731.0" fill="none" stroke="#d9c3e6" stroke-width="1.1" stroke-linejoin="round"/>
<polyline points="274.0,683.0 290.0,660.0 300.0,640.0 295.0,620.0 283.0,600.0 275.0,575.0" fill="none" stroke="#d9c3e6" stroke-width="1.1" stroke-linejoin="round"/>
<polyline points="369.0,731.0 372.0,700.0 350.0,672.0 330.0,660.0" fill="none" stroke="#d9c3e6" stroke-width="1.1" stroke-linejoin="round"/>
<polyline points="369.0,731.0 420.0,690.0 440.0,670.0 475.0,650.0 510.0,640.0" fill="none" stroke="#d9c3e6" stroke-width="1.1" stroke-linejoin="round"/>
<polyline points="369.0,731.0 410.0,770.0 472.0,796.0 520.0,830.0 553.0,843.0 600.0,850.0 669.0,852.0 720.0,850.0 790.0,845.0 853.0,850.0" fill="none" stroke="#d9c3e6" stroke-width="1.1" stroke-linejoin="round"/>
<polyline points="472.0,796.0 470.0,736.0 478.0,700.0 499.0,660.0" fill="none" stroke="#d9c3e6" stroke-width="1.1" stroke-linejoin="round"/>
<polyline points="587.0,740.0 560.0,700.0 530.0,660.0 520.0,640.0" fill="none" stroke="#d9c3e6" stroke-width="1.1" stroke-linejoin="round"/>
<polyline points="587.0,740.0 600.0,700.0 620.0,660.0 640.0,630.0 680.0,600.0" fill="none" stroke="#d9c3e6" stroke-width="1.1" stroke-linejoin="round"/>
<polyline points="587.0,740.0 560.0,790.0 553.0,843.0" fill="none" stroke="#d9c3e6" stroke-width="1.1" stroke-linejoin="round"/>
<polyline points="587.0,740.0 640.0,790.0 669.0,852.0" fill="none" stroke="#d9c3e6" stroke-width="1.1" stroke-linejoin="round"/>
<polyline points="587.0,740.0 620.0,760.0 660.0,770.0 720.0,765.0 800.0,760.0 853.0,765.0" fill="none" stroke="#d9c3e6" stroke-width="1.1" stroke-linejoin="round"/>
<polyline points="669.0,852.0 700.0,880.0 740.0,930.0" fill="none" stroke="#d9c3e6" stroke-width="1.1" stroke-linejoin="round"/>
<polyline points="669.0,852.0 680.0,900.0 675.0,936.0" fill="none" stroke="#d9c3e6" stroke-width="1.1" stroke-linejoin="round"/>
<polyline points="553.0,843.0 520.0,880.0 474.0,925.0" fill="none" stroke="#d9c3e6" stroke-width="1.1" stroke-linejoin="round"/>
<polyline points="266.0,739.0 250.0,800.0 250.0,899.0 318.0,926.0" fill="none" stroke="#d9c3e6" stroke-width="1.1" stroke-linejoin="round"/>
<polyline points="212.0,760.0 266.0,739.0" fill="none" stroke="#d9c3e6" stroke-width="1.1" stroke-linejoin="round"/>
<polyline points="237.0,841.0 300.0,830.0 369.0,800.0 410.0,770.0" fill="none" stroke="#d9c3e6" stroke-width="1.1" stroke-linejoin="round"/>
<polyline points="369.0,731.0 360.0,780.0 340.0,820.0 318.0,926.0" fill="none" stroke="#d9c3e6" stroke-width="1.1" stroke-linejoin="round"/>
<polyline points="212.0,810.0 270.0,800.0 300.0,760.0" fill="none" stroke="#d9c3e6" stroke-width="1.1" stroke-linejoin="round"/>
<polyline points="212.0,880.0 250.0,899.0" fill="none" stroke="#d9c3e6" stroke-width="1.1" stroke-linejoin="round"/>
<polyline points="454.0,923.0 430.0,890.0 400.0,850.0 380.0,830.0 334.0,832.0" fill="none" stroke="#d9c3e6" stroke-width="1.1" stroke-linejoin="round"/>
<polyline points="620.0,571.0 600.0,610.0 570.0,640.0" fill="none" stroke="#d9c3e6" stroke-width="1.1" stroke-linejoin="round"/>
<polyline points="640.0,571.0 650.0,600.0 660.0,620.0" fill="none" stroke="#d9c3e6" stroke-width="1.1" stroke-linejoin="round"/>
<polyline points="700.0,571.0 690.0,600.0 680.0,620.0" fill="none" stroke="#d9c3e6" stroke-width="1.1" stroke-linejoin="round"/>
<polyline points="760.0,571.0 780.0,600.0" fill="none" stroke="#d9c3e6" stroke-width="1.1" stroke-linejoin="round"/>
<polyline points="820.0,571.0 830.0,600.0 854.0,620.0" fill="none" stroke="#d9c3e6" stroke-width="1.1" stroke-linejoin="round"/>
<polyline points="720.0,800.0 760.0,810.0 800.0,790.0 854.0,800.0" fill="none" stroke="#d9c3e6" stroke-width="1.1" stroke-linejoin="round"/>
<polyline points="700.0,900.0 760.0,880.0 853.0,885.0" fill="none" stroke="#d9c3e6" stroke-width="1.1" stroke-linejoin="round"/>
<polyline points="760.0,810.0 750.0,880.0 760.0,936.0" fill="none" stroke="#d9c3e6" stroke-width="1.1" stroke-linejoin="round"/>
<polyline points="810.0,800.0 820.0,880.0 830.0,936.0" fill="none" stroke="#d9c3e6" stroke-width="1.1" stroke-linejoin="round"/>
<polyline points="212.0,640.0 240.0,650.0 262.0,660.0 300.0,670.0 340.0,672.0" fill="none" stroke="#d9c3e6" stroke-width="1.1" stroke-linejoin="round"/>
<polyline points="300.0,690.0 290.0,720.0 266.0,739.0" fill="none" stroke="#d9c3e6" stroke-width="1.1" stroke-linejoin="round"/>
<polyline points="430.0,715.0 425.0,770.0 440.0,800.0 472.0,796.0" fill="none" stroke="#d9c3e6" stroke-width="1.1" stroke-linejoin="round"/>
<polyline points="500.0,770.0 540.0,800.0 578.0,811.0 617.0,847.0" fill="none" stroke="#d9c3e6" stroke-width="1.1" stroke-linejoin="round"/>
<polyline points="320.0,571.0 315.0,590.0 322.0,610.0" fill="none" stroke="#d9c3e6" stroke-width="1.1" stroke-linejoin="round"/>
<polyline points="340.0,571.0 332.0,590.0" fill="none" stroke="#d9c3e6" stroke-width="1.1" stroke-linejoin="round"/>
<polyline points="470.0,850.0 500.0,880.0 510.0,936.0" fill="none" stroke="#d9c3e6" stroke-width="1.1" stroke-linejoin="round"/>
<polyline points="290.0,850.0 300.0,890.0 290.0,936.0" fill="none" stroke="#d9c3e6" stroke-width="1.1" stroke-linejoin="round"/>
<g fill="none" stroke="#ffffff" stroke-width="1.6" opacity="0.9" stroke-linejoin="round"><polyline points="403.6,740.2 432.0,741.7 468.0,738.6 490.0,743.3 509.0,748.0 521.6,752.8 537.4,757.5"/><polyline points="517.0,644.0 517.5,670.0 518.5,700.8"/><polyline points="380.0,850.0 400.0,846.0 420.0,842.0 445.0,848.0 470.0,852.0"/><polyline points="445.0,848.0 455.0,870.0 470.0,890.0"/></g>
<g fill="none" stroke="#c8c8c8" stroke-width="4" stroke-linejoin="round" opacity="0.55" filter="url(#halo)"><polyline points="392.6,665.4 398.9,693.0 391.0,711.8 405.2,730.7 403.6,749.6 410.0,768.5 414.6,787.4 416.2,800.0 417.4,801.0"/><polyline points="334.0,832.6 350.7,825.2 371.0,814.0 380.0,813.0 397.6,799.5 415.1,802.2 426.0,810.3 438.1,815.7 453.0,819.7 461.0,840.0 472.0,827.8 493.5,834.6 501.6,844.0 521.9,860.3 526.0,869.0 509.7,873.8 501.6,884.6 496.2,890.0 474.6,895.4 469.2,902.2 455.7,898.1 438.1,894.0 416.5,890.0 407.0,904.9 388.0,902.2 380.4,903.0 365.6,884.4 350.7,866.0 339.6,847.4 334.0,832.6"/><polyline points="526.0,869.0 547.8,869.6 557.0,877.0 584.8,869.6 603.3,869.6 636.7,888.0"/><polyline points="469.2,902.2 474.6,925.0 472.0,936.0"/><polyline points="387.8,906.7 371.0,920.0 350.7,936.0"/><polyline points="636.7,888.0 623.7,895.6 616.0,917.8 594.0,906.7 566.0,914.0 530.0,925.0 500.0,936.0"/><polyline points="616.0,917.8 612.6,934.4"/><polyline points="742.0,917.8 779.0,910.0 816.0,932.6"/><polyline points="657.0,754.8 657.0,773.0 668.0,795.6 671.9,808.5 670.0,825.0 657.0,834.4 646.0,847.4 631.0,866.0 636.7,888.0"/><polyline points="630.0,720.0 645.0,740.0 657.0,754.8"/><polyline points="679.0,760.0 705.0,758.5 760.7,773.0 816.0,777.0 853.0,782.6"/><polyline points="546.6,640.0 590.8,644.4 629.8,644.4"/><polyline points="582.9,598.3 594.4,601.9 609.7,606.0 615.3,611.6 629.4,610.2"/><polyline points="730.6,572.2 744.7,579.3 761.6,573.6 771.4,573.6"/><polyline points="744.7,579.3 739.0,596.0 735.0,605.0"/><polyline points="820.7,573.6 837.5,572.2 853.0,575.0"/><polyline points="236.0,617.1 248.0,619.5 255.3,622.1 258.7,621.0"/><polyline points="212.0,915.0 220.0,905.0 230.0,895.0"/></g>
<g fill="none" stroke="#9c9c9c" stroke-width="1.3" stroke-linejoin="round"><polyline points="392.6,665.4 398.9,693.0 391.0,711.8 405.2,730.7 403.6,749.6 410.0,768.5 414.6,787.4 416.2,800.0 417.4,801.0"/><polyline points="334.0,832.6 350.7,825.2 371.0,814.0 380.0,813.0 397.6,799.5 415.1,802.2 426.0,810.3 438.1,815.7 453.0,819.7 461.0,840.0 472.0,827.8 493.5,834.6 501.6,844.0 521.9,860.3 526.0,869.0 509.7,873.8 501.6,884.6 496.2,890.0 474.6,895.4 469.2,902.2 455.7,898.1 438.1,894.0 416.5,890.0 407.0,904.9 388.0,902.2 380.4,903.0 365.6,884.4 350.7,866.0 339.6,847.4 334.0,832.6"/><polyline points="526.0,869.0 547.8,869.6 557.0,877.0 584.8,869.6 603.3,869.6 636.7,888.0"/><polyline points="469.2,902.2 474.6,925.0 472.0,936.0"/><polyline points="387.8,906.7 371.0,920.0 350.7,936.0"/><polyline points="636.7,888.0 623.7,895.6 616.0,917.8 594.0,906.7 566.0,914.0 530.0,925.0 500.0,936.0"/><polyline points="616.0,917.8 612.6,934.4"/><polyline points="742.0,917.8 779.0,910.0 816.0,932.6"/><polyline points="657.0,754.8 657.0,773.0 668.0,795.6 671.9,808.5 670.0,825.0 657.0,834.4 646.0,847.4 631.0,866.0 636.7,888.0"/><polyline points="630.0,720.0 645.0,740.0 657.0,754.8"/><polyline points="679.0,760.0 705.0,758.5 760.7,773.0 816.0,777.0 853.0,782.6"/><polyline points="546.6,640.0 590.8,644.4 629.8,644.4"/><polyline points="582.9,598.3 594.4,601.9 609.7,606.0 615.3,611.6 629.4,610.2"/><polyline points="730.6,572.2 744.7,579.3 761.6,573.6 771.4,573.6"/><polyline points="744.7,579.3 739.0,596.0 735.0,605.0"/><polyline points="820.7,573.6 837.5,572.2 853.0,575.0"/><polyline points="236.0,617.1 248.0,619.5 255.3,622.1 258.7,621.0"/><polyline points="212.0,915.0 220.0,905.0 230.0,895.0"/></g>
<g><text x="272.8" y="600.8" font-size="12" fill="#4a4a5a" text-anchor="start" textLength="17.8" lengthAdjust="spacingAndGlyphs" font-style="italic">Fyn</text><text x="309.4" y="599.7" font-size="13.5" fill="#727272" text-anchor="start" textLength="73.9" lengthAdjust="spacingAndGlyphs" >Kopenhaga</text><text x="244.4" y="676.3" font-size="13.5" fill="#727272" text-anchor="start" textLength="61.2" lengthAdjust="spacingAndGlyphs" >Hamburg</text><text x="219.7" y="699.3" font-size="13.5" fill="#727272" text-anchor="start" textLength="41" lengthAdjust="spacingAndGlyphs" >Brema</text><text x="238.1" y="757.6" font-size="13.5" fill="#727272" text-anchor="start" textLength="58.9" lengthAdjust="spacingAndGlyphs" >Hanower</text><text x="350.7" y="751.2" font-size="13.5" fill="#727272" text-anchor="start" textLength="37" lengthAdjust="spacingAndGlyphs" >Berlin</text><text x="447.4" y="755.4" font-size="13.5" fill="#727272" text-anchor="start" textLength="46.6" lengthAdjust="spacingAndGlyphs" >Poznań</text><text x="501.2" y="770" font-size="18" fill="#727272" text-anchor="start" textLength="69.2" lengthAdjust="spacingAndGlyphs" >POLSKA</text><text x="552.3" y="737.5" font-size="13.5" fill="#727272" text-anchor="start" textLength="64.6" lengthAdjust="spacingAndGlyphs" >Warszawa</text><text x="240" y="802.6" font-size="18" fill="#727272" text-anchor="start" textLength="71" lengthAdjust="spacingAndGlyphs" >NIEMCY</text><text x="445" y="814.6" font-size="13.5" fill="#727272" text-anchor="start" textLength="56.7" lengthAdjust="spacingAndGlyphs" >Wrocław</text><text x="380" y="856.7" font-size="15.5" fill="#727272" text-anchor="start" textLength="81" lengthAdjust="spacingAndGlyphs" >REPUBLIKA</text><text x="396" y="874.3" font-size="15.5" fill="#727272" text-anchor="start" textLength="56.6" lengthAdjust="spacingAndGlyphs" >CZESKA</text><text x="531" y="861.3" font-size="13.5" fill="#727272" text-anchor="start" textLength="47.9" lengthAdjust="spacingAndGlyphs" >Kraków</text><text x="650.6" y="871.5" font-size="13.5" fill="#727272" text-anchor="start" textLength="37" lengthAdjust="spacingAndGlyphs" >Lwów</text><text x="820" y="874.3" font-size="18" fill="#727272" text-anchor="start" >UKRAINA</text><text x="507" y="899.3" font-size="15.5" fill="#727272" text-anchor="start" textLength="81.5" lengthAdjust="spacingAndGlyphs" >SŁOWACJA</text><text x="480.4" y="917.8" font-size="12" fill="#727272" text-anchor="start" textLength="57.6" lengthAdjust="spacingAndGlyphs" >Bratyslawa</text><text x="398" y="928" font-size="13.5" fill="#727272" text-anchor="start" textLength="49.6" lengthAdjust="spacingAndGlyphs" >Wiedeń</text><text x="212" y="846.5" font-size="13.5" fill="#727272" text-anchor="start" textLength="20.2" lengthAdjust="spacingAndGlyphs" >em</text><text x="222.4" y="918.75" font-size="14" fill="#808080" text-anchor="start" textLength="56.3" lengthAdjust="spacingAndGlyphs" >Stuttgart</text><text x="691.9" y="650" font-size="13.5" fill="#727272" text-anchor="start" >Wilno</text><text x="751.9" y="658.4" font-size="13.5" fill="#727272" text-anchor="start" >Mińsk</text><text x="723.8" y="694" font-size="18" fill="#727272" text-anchor="start" textLength="88" lengthAdjust="spacingAndGlyphs" >BIAŁORUŚ</text></g>
<circle cx="273.9" cy="683" r="3.6" fill="#fff"/><circle cx="273.9" cy="683" r="2.4" fill="#e02a1a"/><circle cx="240.4" cy="705.5" r="3.6" fill="#fff"/><circle cx="240.4" cy="705.5" r="2.4" fill="#e02a1a"/><circle cx="266.3" cy="738.9" r="3.6" fill="#fff"/><circle cx="266.3" cy="738.9" r="2.4" fill="#e02a1a"/><circle cx="472.4" cy="796" r="3.6" fill="#fff"/><circle cx="472.4" cy="796" r="2.4" fill="#e02a1a"/><circle cx="669.4" cy="851.7" r="3.6" fill="#fff"/><circle cx="669.4" cy="851.7" r="2.4" fill="#e02a1a"/><circle cx="250.4" cy="898.9" r="3.6" fill="#fff"/><circle cx="250.4" cy="898.9" r="2.4" fill="#e02a1a"/><circle cx="318.7" cy="926.1" r="3.6" fill="#fff"/><circle cx="318.7" cy="926.1" r="2.4" fill="#e02a1a"/><rect x="342.40000000000003" y="577.0" width="6.8" height="6.8" fill="#fff"/><rect x="343.5" y="578.1" width="4.6" height="4.6" fill="#e02a1a"/><rect x="365.8" y="728.1" width="6.8" height="6.8" fill="#fff"/><rect x="366.9" y="729.2" width="4.6" height="4.6" fill="#e02a1a"/><rect x="450.6" y="919.6" width="6.8" height="6.8" fill="#fff"/><rect x="451.7" y="920.7" width="4.6" height="4.6" fill="#e02a1a"/><rect x="471.40000000000003" y="921.4" width="6.8" height="6.8" fill="#fff"/><rect x="472.5" y="922.5" width="4.6" height="4.6" fill="#e02a1a"/><circle cx="470" cy="736.7" r="2.3" fill="#c0573a"/><circle cx="553.9" cy="843.1" r="2.3" fill="#c0573a"/><circle cx="237.8" cy="841.5" r="3.8" fill="#fff"/><circle cx="237.8" cy="841.5" r="2.6" fill="#666"/>
<g fill="#7fe0a0" fill-opacity="0.2" stroke="#8fd9a8" stroke-width="1.1"><circle cx="499.3" cy="654.4" r="7.1"/><circle cx="579.6" cy="668.6" r="10.2"/><circle cx="430.7" cy="681.6" r="7.6"/><circle cx="513.8" cy="705.9" r="8.8"/><circle cx="478.4" cy="740.2" r="12.1"/><circle cx="424.9" cy="746.5" r="6.8"/><circle cx="539.7" cy="773.2" r="11.2"/><circle cx="455.1" cy="796.2" r="11.7"/><circle cx="638" cy="791" r="10.3"/><circle cx="578" cy="811.3" r="6.7"/><circle cx="527.5" cy="830.7" r="13.5"/><circle cx="564" cy="851" r="14.4"/><circle cx="617.6" cy="847" r="9.6"/><circle cx="497" cy="816.9" r="5.9"/></g>
<circle cx="587.3" cy="739.7" r="19" fill="#3ef084" fill-opacity="0.72" stroke="#17c24f" stroke-width="1.5"/>
<rect x="583" y="743.4" width="4.4" height="4.4" fill="#5a9a5a"/>
<path d="M218,904 L221.8,905.4 V918.2 L228.8,914.6 L225.2,913.2 L223.2,909.6 L232.5,913.4 V918.6 L222,924.8 L218,922.6 Z" fill="#000"/>
<text x="238.7" y="920.6" font-size="17" fill="#111" text-anchor="start" textLength="31.2" lengthAdjust="spacingAndGlyphs" >Bing</text>
<g font-family="Liberation Sans" font-size="11">
<text x="638.5" y="926" fill="#fff" stroke="#fff" stroke-width="2.5" stroke-linejoin="round" textLength="145.4" lengthAdjust="spacingAndGlyphs">© 2019 Microsoft Corporation</text>
<text x="638.5" y="926" fill="#111" textLength="145.4" lengthAdjust="spacingAndGlyphs">© 2019 Microsoft Corporation</text>
<text x="791.3" y="926" fill="#2636a0" textLength="31.5" lengthAdjust="spacingAndGlyphs">Terms</text>
<rect x="791.3" y="927.6" width="31.5" height="1" fill="#2636a0"/>
</g>
</g>
<!-- /MAP -->

<!-- SCATTER -->
<defs><clipPath id="scClip"><rect x="946" y="600" width="410" height="300"/></clipPath></defs>
<g id="scatter">
<text x="865.6" y="562.2" font-size="14.5" fill="#a6a6a6" textLength="222.9" lengthAdjust="spacingAndGlyphs">Sprzedaż i Zysk wg Klient i Region</text>
<text x="865.6" y="593" font-size="12.5" font-weight="bold" fill="#666" textLength="41.8" lengthAdjust="spacingAndGlyphs">Region</text>
<circle cx="924" cy="588.3" r="6" fill="#01b8aa"/>
<text x="932.2" y="593" font-size="12.5" fill="#666" textLength="53" lengthAdjust="spacingAndGlyphs">centralny</text>
<g stroke="#e9e9e9" stroke-width="1">
<line x1="945.6" y1="614" x2="945.6" y2="892"/>
<line x1="1060.4" y1="614" x2="1060.4" y2="892"/>
<line x1="1174.8" y1="614" x2="1174.8" y2="892"/>
<line x1="1289.6" y1="614" x2="1289.6" y2="892"/>
<line x1="945.6" y1="674.4" x2="1346.3" y2="674.4"/>
<line x1="945.6" y1="872.2" x2="1346.3" y2="872.2"/>
</g>
<g font-size="12.5" fill="#666" text-anchor="middle">
<text x="945.6" y="910" textLength="44" lengthAdjust="spacingAndGlyphs">0,0 mln</text>
<text x="1060.4" y="910" textLength="44" lengthAdjust="spacingAndGlyphs">0,1 mln</text>
<text x="1174.8" y="910" textLength="44" lengthAdjust="spacingAndGlyphs">0,2 mln</text>
<text x="1289.6" y="910" textLength="44" lengthAdjust="spacingAndGlyphs">0,3 mln</text>
<text x="1146.3" y="928.9" textLength="53" lengthAdjust="spacingAndGlyphs">Sprzedaż</text>
</g>
<g font-size="12.5" fill="#252423" text-anchor="end">
<text x="933" y="678.9" textLength="38" lengthAdjust="spacingAndGlyphs">50 tys.</text>
<text x="933" y="777.8" textLength="30.5" lengthAdjust="spacingAndGlyphs">0 tys.</text>
<text x="933" y="876.7" textLength="42.6" lengthAdjust="spacingAndGlyphs">-50 tys.</text>
</g>
<text transform="translate(884.3,753.3) rotate(-90)" x="0" y="0" font-size="12.5" fill="#252423" text-anchor="middle" textLength="26" lengthAdjust="spacingAndGlyphs">Zysk</text>
<rect x="945.6" y="771.8" width="400.7" height="3" fill="#fb7880"/>
<text x="1339.6" y="768.9" font-size="12" font-weight="bold" fill="#fc1424" text-anchor="end" textLength="105" lengthAdjust="spacingAndGlyphs">Linia rentowności</text>
<g clip-path="url(#scClip)">
<g fill="#01b8aa" fill-opacity="0.82">
<circle cx="982.0" cy="732.0" r="7.5"/><circle cx="986.0" cy="732.0" r="7.5"/><circle cx="978.0" cy="736.0" r="7.5"/><circle cx="982.0" cy="736.0" r="7.5"/><circle cx="986.0" cy="736.0" r="7.5"/><circle cx="974.0" cy="740.0" r="7.5"/><circle cx="978.0" cy="740.0" r="7.5"/><circle cx="982.0" cy="740.0" r="7.5"/><circle cx="986.0" cy="740.0" r="7.5"/><circle cx="970.0" cy="744.0" r="7.5"/><circle cx="974.0" cy="744.0" r="7.5"/><circle cx="978.0" cy="744.0" r="7.5"/><circle cx="982.0" cy="744.0" r="7.5"/><circle cx="986.0" cy="744.0" r="7.5"/><circle cx="966.0" cy="748.0" r="7.5"/><circle cx="970.0" cy="748.0" r="7.5"/><circle cx="974.0" cy="748.0" r="7.5"/><circle cx="978.0" cy="748.0" r="7.5"/><circle cx="982.0" cy="748.0" r="7.5"/><circle cx="986.0" cy="748.0" r="7.5"/><circle cx="962.0" cy="752.0" r="7.5"/><circle cx="966.0" cy="752.0" r="7.5"/><circle cx="970.0" cy="752.0" r="7.5"/><circle cx="974.0" cy="752.0" r="7.5"/><circle cx="978.0" cy="752.0" r="7.5"/><circle cx="982.0" cy="752.0" r="7.5"/><circle cx="958.0" cy="756.0" r="7.5"/><circle cx="962.0" cy="756.0" r="7.5"/><circle cx="966.0" cy="756.0" r="7.5"/><circle cx="970.0" cy="756.0" r="7.5"/><circle cx="974.0" cy="756.0" r="7.5"/><circle cx="978.0" cy="756.0" r="7.5"/><circle cx="982.0" cy="756.0" r="7.5"/><circle cx="954.0" cy="760.0" r="7.5"/><circle cx="958.0" cy="760.0" r="7.5"/><circle cx="962.0" cy="760.0" r="7.5"/><circle cx="966.0" cy="760.0" r="7.5"/><circle cx="970.0" cy="760.0" r="7.5"/><circle cx="974.0" cy="760.0" r="7.5"/><circle cx="978.0" cy="760.0" r="7.5"/><circle cx="982.0" cy="760.0" r="7.5"/><circle cx="950.0" cy="764.0" r="7.5"/><circle cx="954.0" cy="764.0" r="7.5"/><circle cx="958.0" cy="764.0" r="7.5"/><circle cx="962.0" cy="764.0" r="7.5"/><circle cx="966.0" cy="764.0" r="7.5"/><circle cx="970.0" cy="764.0" r="7.5"/><circle cx="974.0" cy="764.0" r="7.5"/><circle cx="978.0" cy="764.0" r="7.5"/><circle cx="946.0" cy="768.0" r="7.5"/><circle cx="950.0" cy="768.0" r="7.5"/><circle cx="954.0" cy="768.0" r="7.5"/><circle cx="958.0" cy="768.0" r="7.5"/><circle cx="962.0" cy="768.0" r="7.5"/><circle cx="966.0" cy="768.0" r="7.5"/><circle cx="970.0" cy="768.0" r="7.5"/><circle cx="974.0" cy="768.0" r="7.5"/><circle cx="978.0" cy="768.0" r="7.5"/><circle cx="946.0" cy="772.0" r="7.5"/><circle cx="950.0" cy="772.0" r="7.5"/><circle cx="954.0" cy="772.0" r="7.5"/><circle cx="958.0" cy="772.0" r="7.5"/><circle cx="962.0" cy="772.0" r="7.5"/><circle cx="966.0" cy="772.0" r="7.5"/><circle cx="970.0" cy="772.0" r="7.5"/><circle cx="974.0" cy="772.0" r="7.5"/><circle cx="978.0" cy="772.0" r="7.5"/><circle cx="946.0" cy="776.0" r="7.5"/><circle cx="950.0" cy="776.0" r="7.5"/><circle cx="954.0" cy="776.0" r="7.5"/><circle cx="958.0" cy="776.0" r="7.5"/><circle cx="962.0" cy="776.0" r="7.5"/><circle cx="966.0" cy="776.0" r="7.5"/><circle cx="970.0" cy="776.0" r="7.5"/><circle cx="974.0" cy="776.0" r="7.5"/><circle cx="946.0" cy="780.0" r="7.5"/><circle cx="950.0" cy="780.0" r="7.5"/><circle cx="954.0" cy="780.0" r="7.5"/><circle cx="958.0" cy="780.0" r="7.5"/><circle cx="962.0" cy="780.0" r="7.5"/><circle cx="966.0" cy="780.0" r="7.5"/><circle cx="970.0" cy="780.0" r="7.5"/><circle cx="946.0" cy="784.0" r="7.5"/><circle cx="950.0" cy="784.0" r="7.5"/><circle cx="954.0" cy="784.0" r="7.5"/><circle cx="958.0" cy="784.0" r="7.5"/><circle cx="962.0" cy="784.0" r="7.5"/><circle cx="946.0" cy="788.0" r="7.5"/><circle cx="950.0" cy="788.0" r="7.5"/><circle cx="954.0" cy="788.0" r="7.5"/><circle cx="958.0" cy="788.0" r="7.5"/><circle cx="944.0" cy="766.0" r="7.5"/><circle cx="951.0" cy="760.0" r="7.5"/><circle cx="958.0" cy="754.0" r="7.5"/><circle cx="964.0" cy="748.0" r="7.5"/><circle cx="970.0" cy="742.0" r="7.5"/><circle cx="974.5" cy="737.0" r="7.5"/><circle cx="979.0" cy="732.0" r="7.5"/><circle cx="983.0" cy="731.0" r="7.5"/><circle cx="987.0" cy="730.0" r="7.5"/><circle cx="988.0" cy="737.5" r="7.5"/><circle cx="989.0" cy="745.0" r="7.5"/><circle cx="986.0" cy="750.5" r="7.5"/><circle cx="983.0" cy="756.0" r="7.5"/><circle cx="982.0" cy="764.0" r="7.5"/><circle cx="981.0" cy="772.0" r="7.5"/><circle cx="977.0" cy="775.5" r="7.5"/><circle cx="973.0" cy="779.0" r="7.5"/><circle cx="968.0" cy="782.5" r="7.5"/><circle cx="963.0" cy="786.0" r="7.5"/><circle cx="959.0" cy="789.0" r="7.5"/><circle cx="955.0" cy="792.0" r="7.5"/><circle cx="949.5" cy="791.0" r="7.5"/><circle cx="944.0" cy="790.0" r="7.5"/><circle cx="944.0" cy="778.0" r="7.5"/>
<circle cx="1050.7" cy="652.2" r="7.8"/><circle cx="1011.9" cy="701.5" r="7.8"/><circle cx="1000.7" cy="709.6" r="7.8"/><circle cx="999.5" cy="722.6" r="7.8"/><circle cx="1121.9" cy="713.3" r="7.8"/><circle cx="1292.2" cy="723.0" r="7.8"/><circle cx="1162.2" cy="737.8" r="7.8"/><circle cx="1109.3" cy="748.1" r="7.8"/><circle cx="1051.5" cy="749.3" r="7.8"/><circle cx="1064.8" cy="753.0" r="7.8"/><circle cx="1059.3" cy="756.3" r="7.8"/><circle cx="1026.1" cy="756.6" r="7.8"/><circle cx="1050.8" cy="766.6" r="7.8"/><circle cx="1077.2" cy="770.6" r="7.8"/><circle cx="1047.0" cy="777.1" r="7.8"/><circle cx="1023.1" cy="799.4" r="7.8"/><circle cx="1001.7" cy="789.5" r="7.8"/><circle cx="978.1" cy="864.0" r="7.8"/><circle cx="969.8" cy="839.8" r="7.8"/><circle cx="961.8" cy="831.3" r="7.8"/><circle cx="959.3" cy="821.6" r="7.8"/><circle cx="955.6" cy="824.2" r="7.8"/><circle cx="948.3" cy="812.1" r="7.8"/><circle cx="972.9" cy="796.6" r="7.8"/><circle cx="964.8" cy="799.4" r="7.8"/><circle cx="1029.6" cy="774.4" r="7.8"/><circle cx="1019.4" cy="780.0" r="7.8"/><circle cx="1007.4" cy="774.4" r="7.8"/><circle cx="1017.6" cy="764.3" r="7.8"/><circle cx="1000.0" cy="762.4" r="7.8"/><circle cx="992.6" cy="776.3" r="7.8"/><circle cx="979.6" cy="781.0" r="7.8"/><circle cx="950.0" cy="789.3" r="7.8"/><circle cx="955.6" cy="793.0" r="7.8"/><circle cx="950.0" cy="719.8" r="7.8"/><circle cx="950.0" cy="742.0" r="7.8"/><circle cx="996.3" cy="737.4" r="7.8"/><circle cx="995.4" cy="748.9" r="7.8"/><circle cx="986.1" cy="727.8" r="7.8"/><circle cx="975.9" cy="735.6" r="7.8"/><circle cx="1005.0" cy="770.0" r="7.8"/><circle cx="1012.0" cy="776.0" r="7.8"/><circle cx="1024.0" cy="772.0" r="7.8"/><circle cx="990.0" cy="768.0" r="7.8"/><circle cx="982.0" cy="790.0" r="7.8"/>
</g>
</g>
</g>

<!-- TOOLTIP -->
<g id="tooltip">
<path d="M630,598 H956 V753.7 H630 V743.4 L619.7,733.4 L630,723.5 Z" fill="#333" fill-opacity="0.94"/>
<g font-size="17.5" fill="#e3e3e3" text-anchor="end">
<text x="776" y="643.1" textLength="112.6" lengthAdjust="spacingAndGlyphs">Województwo</text>
<text x="776" y="669.7" textLength="71.5" lengthAdjust="spacingAndGlyphs">Sprzedaż</text>
<text x="776" y="696.9" textLength="121.6" lengthAdjust="spacingAndGlyphs">Pierwsze: Klient</text>
<text x="776" y="723.7" textLength="35.5" lengthAdjust="spacingAndGlyphs">Zysk</text>
</g>
<g font-size="17.5" fill="#fff" font-weight="bold">
<text x="794" y="643.1" textLength="104" lengthAdjust="spacingAndGlyphs">mazowieckie</text>
<text x="794" y="669.7" textLength="78.3" lengthAdjust="spacingAndGlyphs">4 877 873</text>
<text x="794" y="696.9" textLength="138.3" lengthAdjust="spacingAndGlyphs">Adam Fedeńczak</text>
<text x="794" y="723.7" textLength="64.4" lengthAdjust="spacingAndGlyphs">633 278</text>
</g>
</g>

<!-- SLICERS -->
<g id="slicers" fill="#252423">
<text x="1510.5" y="90.8" font-size="14.5" textLength="92.6" lengthAdjust="spacingAndGlyphs">Województwo</text>
<rect x="1506.5" y="103.5" width="252" height="34" fill="#fff" stroke="#e3e3e3" stroke-width="1"/>
<text x="1514" y="128" font-size="16.5" textLength="71" lengthAdjust="spacingAndGlyphs">Wszystkie</text>
<polyline points="1735,117.5 1743.6,126 1752.2,117.5" fill="none" stroke="#333" stroke-width="1.4"/>

<text x="1510.5" y="230.2" font-size="14.5" textLength="111.4" lengthAdjust="spacingAndGlyphs">Data zamówienia</text>
<rect x="1510.5" y="243.5" width="91" height="31" fill="#fff" stroke="#e6e6e6"/>
<rect x="1609.5" y="243.5" width="91" height="31" fill="#fff" stroke="#e6e6e6"/>
<text x="1519" y="265" font-size="14.5" textLength="75" lengthAdjust="spacingAndGlyphs">2011-01-01</text>
<text x="1618" y="265" font-size="14.5" textLength="75" lengthAdjust="spacingAndGlyphs">2014-12-31</text>
<rect x="1513" y="295.5" width="262" height="4" fill="#666"/>
<rect x="1510" y="287" width="6" height="20.5" rx="3" fill="#666"/>
<rect x="1772" y="287" width="6" height="20.5" rx="3" fill="#666"/>

<text x="1510.5" y="409" font-size="14.5" textLength="29" lengthAdjust="spacingAndGlyphs">Zysk</text>
<rect x="1510.5" y="421.5" width="91" height="31" fill="#fff" stroke="#e6e6e6"/>
<rect x="1609.5" y="421.5" width="91" height="31" fill="#fff" stroke="#e6e6e6"/>
<text x="1519.5" y="442.6" font-size="14.5" textLength="49" lengthAdjust="spacingAndGlyphs">-57 669</text>
<text x="1618.4" y="442.6" font-size="14.5" textLength="42.7" lengthAdjust="spacingAndGlyphs">57 163</text>
<rect x="1513" y="474" width="262" height="4" fill="#666"/>
<rect x="1510" y="466" width="6" height="20.5" rx="3" fill="#666"/>
<rect x="1772" y="466" width="6" height="20.5" rx="3" fill="#666"/>
</g>

<!-- BOTTOM BAR CONTENT -->
<text x="153.8" y="978.9" font-size="22" fill="#111" stroke="#111" stroke-width="0.3" textLength="180.5" lengthAdjust="spacingAndGlyphs">Microsoft Power BI</text>
<polyline points="933.5,959 922,970 933.5,981" fill="none" stroke="#111" stroke-width="2"/>
<text x="964.8" y="979.2" font-size="22" fill="#111" stroke="#111" stroke-width="0.3" textLength="43.2" lengthAdjust="spacingAndGlyphs">7 z 7</text>
<polyline points="1039.5,959 1051,970 1039.5,981" fill="none" stroke="#c6c6c6" stroke-width="2"/>


<!-- bottom right bar icons -->
<g fill="none" stroke="#000" stroke-width="1.6">
<path d="M1760.8,963.8 V978.1 H1777 V975"/>
<path d="M1775.6,962.2 V958.6 L1782.6,966.1 L1775.6,973.6 V969.9 C1770.5,969.6 1767.2,971 1764.8,973.2 C1765.6,967 1769.5,962.6 1775.6,962.2 Z" stroke-width="1.5" stroke-linejoin="miter"/>
<path d="M1822.3,979.6 L1841.6,960 M1835.2,959.8 H1841.8 V966.7 M1822.2,973.2 V979.8 H1828.9" stroke-width="1.7"/>
</g>

<!-- bottom blue icons -->
<g fill="#2196f3">
<circle cx="173" cy="1032.4" r="15"/>
<rect x="166" y="1029.7" width="17" height="5.4" fill="#fff"/>
<path d="M173.3,1024.3 L165.2,1032.4 L173.3,1040.5" fill="none" stroke="#fff" stroke-width="4.4" stroke-linecap="square"/>

<rect x="232.9" y="1027.3" width="8.3" height="17.8" rx="1.8"/>
<rect x="236.2" y="1040" width="2.2" height="2.2" fill="#fff"/>
<path d="M240,1029.2 L241.6,1028.4 C244.5,1025.5 247,1022.5 248.2,1020 C248.8,1017.5 249.5,1016.5 251,1016.5 C253.5,1016.5 254.3,1018.5 254.2,1020.5 C254,1022.5 253.3,1024.5 252.6,1026.6 H259.3 C261.5,1026.8 262.8,1028.5 262.2,1031 L262,1032.5 C261.8,1035 261.3,1038 260.6,1041 C260,1044 258.6,1046.2 255.5,1046.3 C251.5,1046.5 247,1045.5 240.5,1043.2" fill="none" stroke="#2196f3" stroke-width="2.7" stroke-linejoin="round"/>

<ellipse cx="326" cy="1032.4" rx="17.9" ry="12.4"/>
<path d="M316,1041 C315.5,1044.5 313.5,1047.5 311,1049.6 C316,1049.5 320,1047.5 323.5,1044.8 Z"/>

<rect x="388.7" y="1017" width="15.3" height="12.8" rx="2.2"/>
<rect x="406.2" y="1017" width="15.3" height="12.8" rx="2.2"/>
<rect x="388.7" y="1032.2" width="15.3" height="12.8" rx="2.2"/>
<rect x="406.2" y="1032.2" width="15.3" height="12.8" rx="2.2"/>

<path d="M1736.4,1033 A12.6,12.6 0 0 1 1759.6,1025.3" fill="none" stroke="#2196f3" stroke-width="5.4"/>
<polygon points="1763.8,1018.3 1763.8,1029.8 1752.5,1029.8"/>
<path d="M1761.6,1031.5 A12.6,12.6 0 0 1 1738.4,1039.5" fill="none" stroke="#2196f3" stroke-width="5.4"/>
<polygon points="1734.1,1035.1 1734.1,1046.2 1745.4,1035.1"/>
<rect x="1730" y="1029.8" width="40" height="5.3" fill="#fff"/>

<path d="M1817,1021.9 A12.7,12.7 0 1 0 1831.2,1021.9" fill="none" stroke="#2196f3" stroke-width="5.2" stroke-linecap="round"/>
<path d="M1824.1,1019 V1030" fill="none" stroke="#2196f3" stroke-width="5.2" stroke-linecap="round"/>
</g>

</svg>
</body></html>
